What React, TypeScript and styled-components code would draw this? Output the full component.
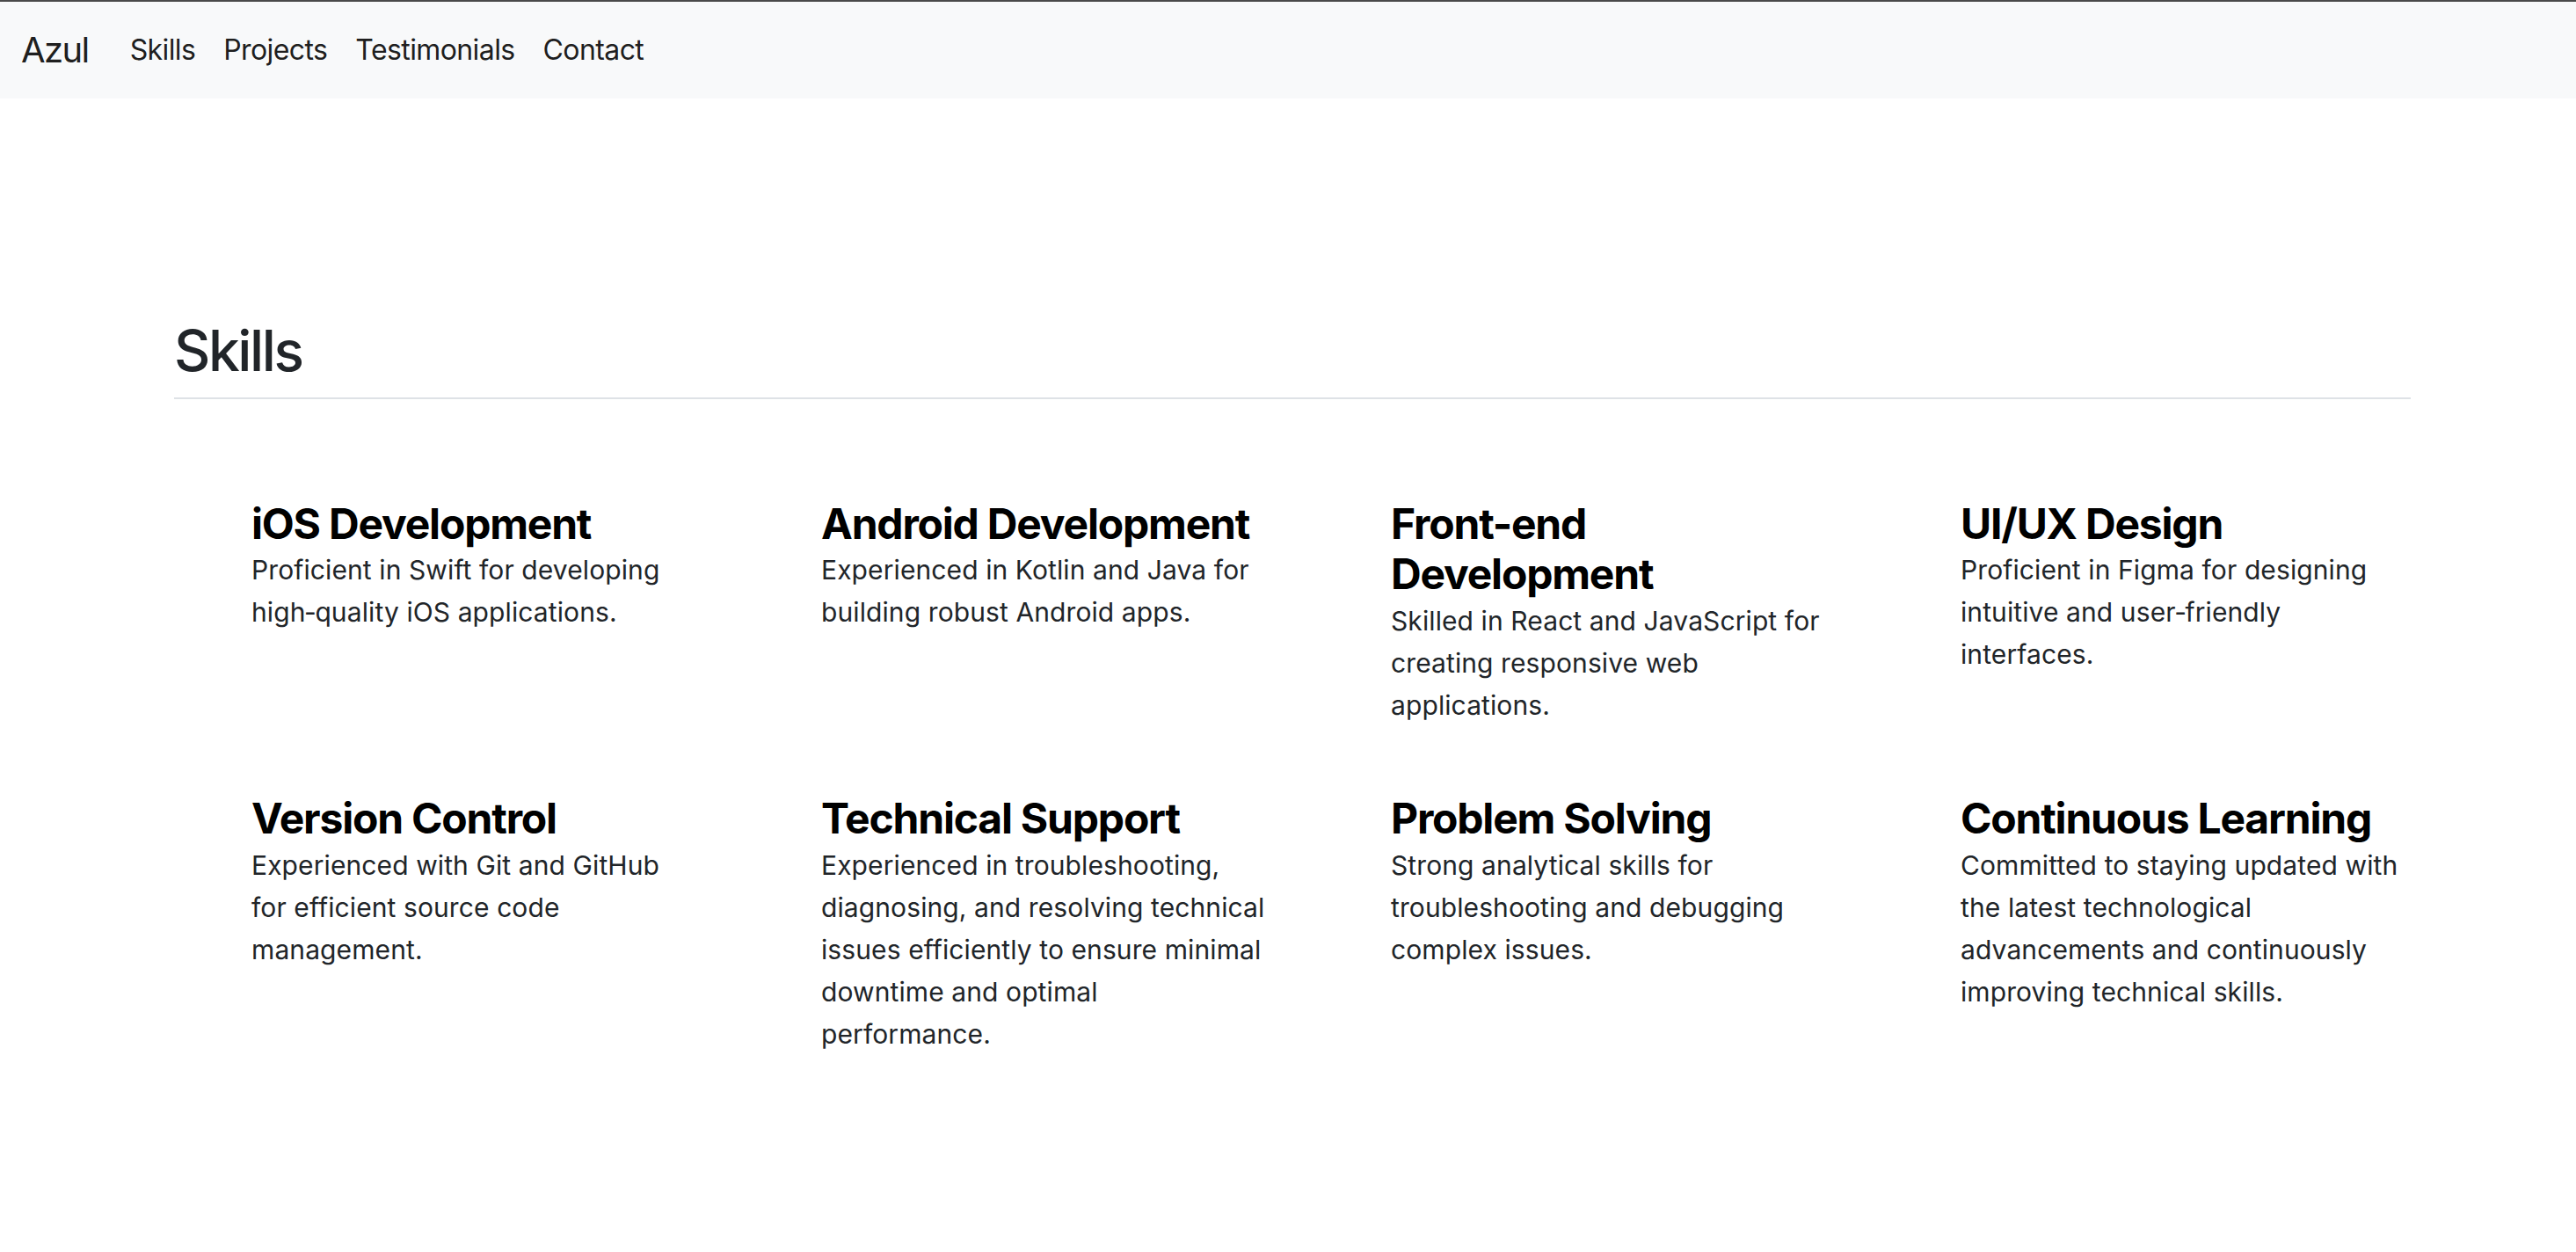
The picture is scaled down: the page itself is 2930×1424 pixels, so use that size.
import React from "react";
import styled, { createGlobalStyle } from "styled-components";

const GlobalStyle = createGlobalStyle`
  html, body {
    margin: 0;
    padding: 0;
    background: #ffffff;
  }
  body {
    font-family: Inter, "Noto Sans", "Liberation Sans", sans-serif;
    color: #212529;
    -webkit-font-smoothing: antialiased;
  }
  * { box-sizing: border-box; }
`;

const NavBar = styled.nav`
  display: flex;
  align-items: center;
  height: 112px;
  padding: 0 24px;
  background: #f8f9fa;
  border-top: 2px solid #4a4a4a;
`;

const Brand = styled.a`
  font-size: 40px;
  line-height: 60px;
  color: rgba(0, 0, 0, 0.9);
  text-decoration: none;
  margin-right: 31px;
  letter-spacing: -1.6px;
`;

const NavList = styled.ul`
  display: flex;
  list-style: none;
  margin: 0;
  padding: 0;
`;

const NavLink = styled.a`
  display: block;
  padding: 0 16px;
  font-size: 32px;
  line-height: 48px;
  color: rgba(0, 0, 0, 0.9);
  text-decoration: none;
  letter-spacing: -0.6px;
`;

const Main = styled.main`
  padding: 249px 188px 120px 198px;
`;

const SectionTitle = styled.h2`
  margin: 0;
  padding-bottom: 14px;
  font-size: 64px;
  line-height: 76.8px;
  font-weight: 500;
  color: #212529;
  border-bottom: 2px solid #dee2e6;
  letter-spacing: -2.4px;
`;

const SkillGrid = styled.div`
  display: grid;
  grid-template-columns: repeat(4, 508px);
  column-gap: 140px;
  row-gap: 76px;
  padding-left: 88px;
  margin-top: 113px;
`;

const SkillCard = styled.div`
  display: flex;
  flex-direction: column;
`;

const SkillName = styled.h4`
  margin: 0;
  font-size: 48px;
  line-height: 57.6px;
  font-weight: 700;
  color: #000;
  letter-spacing: -1.2px;
`;

const SkillText = styled.p`
  margin: 0;
  font-size: 30px;
  line-height: 48px;
  color: #212529;
  letter-spacing: 0.1px;
`;

const skills = [
  { name: "iOS Development", text: "Proficient in Swift for developing high\u2011quality iOS applications." },
  { name: "Android Development", text: "Experienced in Kotlin and Java for building robust Android apps." },
  { name: "Front-end Development", text: "Skilled in React and JavaScript for creating responsive web applications." },
  { name: "UI/UX Design", text: "Proficient in Figma for designing intuitive and user\u2011friendly interfaces." },
  { name: "Version Control", text: "Experienced with Git and GitHub for efficient source code management." },
  {
    name: "Technical Support",
    text: "Experienced in troubleshooting, diagnosing, and resolving technical issues efficiently to ensure minimal downtime and optimal performance.",
  },
  { name: "Problem Solving", text: "Strong analytical skills for troubleshooting and debugging complex issues." },
  {
    name: "Continuous Learning",
    text: "Committed to staying updated with the latest technological advancements and continuously improving technical skills.",
  },
];

const links = ["Skills", "Projects", "Testimonials", "Contact"];

export default function App() {
  return (
    <>
      <GlobalStyle />
      <NavBar>
        <Brand href="#">Azul</Brand>
        <NavList>
          {links.map((l) => (
            <li key={l}>
              <NavLink href={`#${l.toLowerCase()}`}>{l}</NavLink>
            </li>
          ))}
        </NavList>
      </NavBar>
      <Main>
        <section id="skills">
          <SectionTitle>Skills</SectionTitle>
          <SkillGrid>
            {skills.map((s) => (
              <SkillCard key={s.name}>
                <SkillName>{s.name}</SkillName>
                <SkillText>{s.text}</SkillText>
              </SkillCard>
            ))}
          </SkillGrid>
        </section>
      </Main>
    </>
  );
}
